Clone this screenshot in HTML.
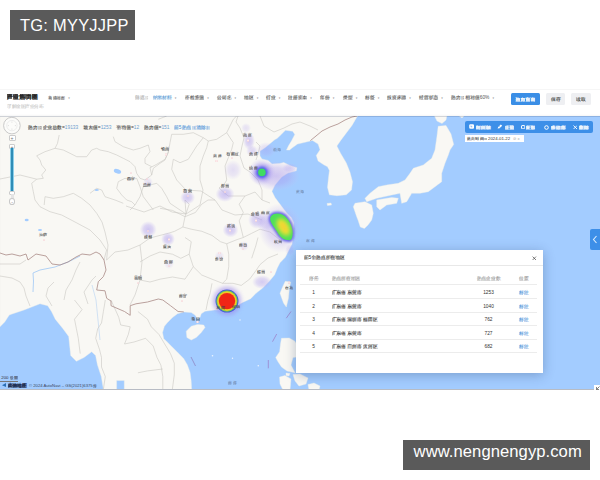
<!DOCTYPE html>
<html><head><meta charset="utf-8"><title>产业热力图</title>
<style>
*{margin:0;padding:0;box-sizing:border-box}
html,body{width:600px;height:480px;background:#fff;overflow:hidden}
body{position:relative;font-family:"Liberation Sans",sans-serif;color:#333}
.a{position:absolute;white-space:nowrap}
.logo .z,.ttl .z,.tb .z{background:linear-gradient(color-mix(in srgb,currentColor 75%,transparent),color-mix(in srgb,currentColor 75%,transparent)) 50% 60%/90% 70% no-repeat}
.z{display:inline-block;width:1em;line-height:1.15em;text-align:center;background:linear-gradient(color-mix(in srgb,currentColor 28%,transparent),color-mix(in srgb,currentColor 28%,transparent)) 50% 60%/80% 62% no-repeat}
.wm{background:#5a5a5a;color:#fff}
#hdr{left:0;top:89px;width:600px;height:27px;background:#fff;border-top:1px solid #f6f6f6}
.f{font-size:4.8px;line-height:5px;top:95.2px;color:#555}
.f i{font-style:normal;font-size:2.6px;color:#888;margin-left:2.6px;vertical-align:.5px}
.btn{top:92.7px;height:12.2px;border-radius:1.5px;font-size:5px;line-height:12.2px;text-align:center}
#map{left:0;top:116px;width:600px;height:274px;overflow:hidden;background:#a3ccff;border-bottom:.8px solid #b8bcc4}
.lbl{font-size:4.3px;line-height:5px;color:#444}
.dot{width:2.4px;height:2.4px;border-radius:50%;background:#e27c86;border:.45px solid #fde8ea}
</style></head><body>

<div class="a wm" style="left:10px;top:10px;width:125px;height:30px;font-size:16.4px;letter-spacing:.28px;line-height:30px;padding-left:10px">TG: MYYJJPP</div>

<div id="hdr" class="a">
</div>
<div class="a ttl" style="left:6.5px;top:93px;font-size:6.3px;line-height:8px;font-weight:bold;color:#222"><span class="z">产</span><span class="z">业</span><span class="z">热</span><span class="z">力</span><span class="z">图</span></div>
<div class="a" style="left:7px;top:103.5px;font-size:4.5px;line-height:6px;color:#c8c8c8"><span class="z">了</span><span class="z">解</span><span class="z">全</span><span class="z">国</span><span class="z">产</span><span class="z">业</span><span class="z">分</span><span class="z">布</span></div>
<div class="a f" style="left:48.3px;font-size:4.2px"><span class="z">高</span><span class="z">德</span><span class="z">地</span><span class="z">图</span><i>▼</i></div>
<div class="a f" style="left:135px;color:#aaa"><span class="z">筛</span><span class="z">选</span><span class="z">：</span></div>
<div class="a f" style="left:152.5px;color:#5b9bd5"><span class="z">纳</span><span class="z">米</span><span class="z">材</span><span class="z">料</span><i>▼</i></div>
<div class="a f" style="left:185px"><span class="z">不</span><span class="z">检</span><span class="z">查</span><span class="z">值</span><i>▼</i></div>
<div class="a f" style="left:217px"><span class="z">公</span><span class="z">司</span><span class="z">名</span><i>▼</i></div>
<div class="a f" style="left:244px"><span class="z">地</span><span class="z">区</span><i>▼</i></div>
<div class="a f" style="left:266px"><span class="z">行</span><span class="z">业</span><i>▼</i></div>
<div class="a f" style="left:288px"><span class="z">注</span><span class="z">册</span><span class="z">资</span><span class="z">本</span><i>▼</i></div>
<div class="a f" style="left:320px"><span class="z">年</span><span class="z">份</span><i>▼</i></div>
<div class="a f" style="left:343px"><span class="z">类</span><span class="z">型</span><i>▼</i></div>
<div class="a f" style="left:365px"><span class="z">标</span><span class="z">签</span><i>▼</i></div>
<div class="a f" style="left:387px"><span class="z">投</span><span class="z">资</span><span class="z">来</span><span class="z">源</span><i>▼</i></div>
<div class="a f" style="left:419px"><span class="z">经</span><span class="z">营</span><span class="z">状</span><span class="z">态</span><i>▼</i></div>
<div class="a f" style="left:451px"><span class="z">热</span><span class="z">力</span><span class="z">：</span><span class="z">相</span><span class="z">对</span><span class="z">值</span>60%<i>▼</i></div>
<div class="a btn tb" style="left:510.5px;width:29.6px;background:#3a8ee6;color:#fff"><span class="z">热</span><span class="z">力</span><span class="z">查</span><span class="z">询</span></div>
<div class="a btn" style="left:546.2px;width:19.3px;background:#eeeff2;color:#444"><span class="z">保</span><span class="z">存</span></div>
<div class="a btn" style="left:570.7px;width:20.6px;background:#eeeff2;color:#444"><span class="z">读</span><span class="z">取</span></div>

<div id="map" class="a">
<svg width="600" height="275" viewBox="0 116 600 275" style="position:absolute;left:0;top:0">
<defs>
  <radialGradient id="lav"><stop offset="0" stop-color="#a896ee" stop-opacity=".62"/><stop offset=".55" stop-color="#b0a0f0" stop-opacity=".45"/><stop offset=".85" stop-color="#c0b4f2" stop-opacity=".18"/><stop offset="1" stop-color="#c8bef4" stop-opacity="0"/></radialGradient>
  <filter id="bl05" x="-50%" y="-50%" width="200%" height="200%"><feGaussianBlur stdDeviation=".6"/></filter>
  <filter id="bl1" x="-50%" y="-50%" width="200%" height="200%"><feGaussianBlur stdDeviation="1"/></filter>
  <filter id="bl2" x="-50%" y="-50%" width="200%" height="200%"><feGaussianBlur stdDeviation="2"/></filter>
  <filter id="bl3" x="-80%" y="-80%" width="260%" height="260%"><feGaussianBlur stdDeviation="3"/></filter>
</defs>
<g fill="#f9f8f4" stroke="#f0efe9" stroke-width=".4"><path d="M0,116 L357.5,116 L352,125.4 L346.3,132.9 L340.7,140.4 L336.9,146 L340.7,153.5 L346.3,162.9 L350,172.3 L352.5,181.7 L351.5,190 L346.3,194.8 L336.9,195.7 L329.4,194.8 L327.5,187.3 L328.5,177.9 L329.4,170.4 L327.5,166.7 L323.8,164.8 L318.1,161 L316.3,155.4 L320,149.8 L318.1,144.1 L312.5,140.4 L305,142.3 L297.5,144.1 L292,148 L289.6,150 L286.5,150 L288.5,145.8 L291.7,140.6 L294.8,134.4 L292.7,131.3 L285.4,130.2 L281.25,134.4 L277,138.5 L275,139.5 L265,147.7 L260,151 L260,156 L262,159 L268,160.4 L272,164 L279.6,163.5 L283.75,162.5 L290,165.6 L296.8,167.7 L296.25,170.8 L288,173 L281.7,177 L275,185 L271.9,191.25 L275,197.5 L278.75,202.5 L282.5,207.5 L286.25,212.5 L291.25,217.5 L293.75,222.5 L293.5,230 L293.3,235 L292,244 L289.3,249.3 L285.3,257.3 L280,262.7 L277.3,268 L274.7,274.7 L269.3,281.3 L262.7,288 L256,293.3 L250.7,298.7 L242.5,302.5 L233,308 L223.8,310 L214.4,310 L205,311.25 L201.25,313.75 L200,317.5 L197.5,318.75 L195,315 L191.25,312.5 L183.75,311.9 L177.5,313.75 L172.5,317.5 L167.5,322.5 L164.4,326.25 L162.5,332.5 L163.75,338.75 L166.25,341 L171.7,346.5 L178.2,353 L183.6,358.4 L187.4,364.9 L190.1,372.5 L191.2,381.2 L191.7,391 L124.3,391 L124.3,380.5 L116.6,380.5 L116.6,391 L103.2,391 L103.2,388 L101.3,376.6 L97.5,365.1 L95.6,355.6 L91.7,351.7 L84,357.5 L76.4,361.3 L70.7,355.6 L69.7,346 L68.7,336.4 L63,328.7 L55.3,319.2 L51.5,311.5 L47.7,305.7 L40,303.8 L24,310 L12,314 L9.3,315 L4.7,322 L0,326.7 Z"/><path d="M438.2,126.3 L446,125.5 L451,134 L453.7,144.4 L450,150 L448.3,155 L445,163.3 L441.7,173.3 L441.7,181.7 L435,186.7 L428.3,191.7 L420,193.3 L411.7,193.3 L406.7,201.7 L401.7,203.3 L400,193.3 L391.7,195 L376.7,198.3 L366.7,201.7 L365,198.3 L370,193.3 L378.3,186.7 L386.7,185 L398.3,183.3 L405,180 L410,173.3 L413.3,168.3 L423.3,165 L431.7,158.3 L435,150 L436.9,136.7 Z"/><path d="M434,115 L447,115 L446,120 L442,123.5 L437,121 Z"/><path d="M458,115 L465,115 L462,118 Z"/><path d="M376.7,200 L391.7,197.5 L398.3,198.3 L396.7,203.3 L386.7,205 L380,210 L376.7,206.7 Z"/><path d="M355,203.3 L365,201.7 L371.7,205 L373.3,213.3 L371.7,220 L368,225 L364.4,228.5 L360.3,227 L358,220 L356.7,216.7 L353.3,206.7 Z"/><path d="M285.3,281.3 L290.7,282 L289.3,289.3 L288.5,298 L286.3,307 L283.5,303 L280,293.3 L282.7,286.7 Z"/><path d="M186.25,331.25 L191.25,326.25 L197.5,324.4 L203.75,325 L205,327.5 L201.25,332.5 L196.25,337.5 L191.25,340 L186.9,337.5 Z"/><path d="M281.5,338.3 L289.2,338 L294.9,341.2 L297,345 L297,357 L293,357.5 L291,365.1 L295,372.8 L287,371 L281.5,367 L277.7,361.3 L275.7,357.5 L279.6,351.7 L280.5,344 Z"/><path d="M327,203.5 L331,203 L331.5,205 L327.5,205.5 Z"/><path d="M279.6,377 L285,375.5 L291,379 L290,390 L283,390 L280,384 Z"/><path d="M293,374.5 L300,374 L308,378 L306,384 L299,386 L295,381 Z"/><path d="M308,384.5 L314,383 L320,386 L319,390 L309,390 Z"/><path d="M286,373 L290,373.5 L289,376 L286,375.5 Z"/></g>
<ellipse cx="117.5" cy="171.2" rx="3.8" ry="2.2" transform="rotate(20 117.5 171.2)" fill="#a3ccff"/><ellipse cx="26.7" cy="220" rx="2" ry="1.2" fill="#a3ccff"/><ellipse cx="40" cy="230" rx="2" ry="1" fill="#a3ccff"/><ellipse cx="96.7" cy="190" rx="2.2" ry="1" fill="#a3ccff"/><path d="M33,292 L33.5,281 L33,273 L40,270 L55,267 L68,262 L80,256" stroke="#a9cdf5" stroke-width=".9" fill="none"/><path d="M100,340 L98,320 L96,300 L92,285" stroke="#b5d2f2" stroke-width=".6" fill="none"/>
<path d="M160,208.3 L172.5,210.4 L185,216.7 L195.4,212.5 L201.7,204.2 L208,200 L215,200" fill="none" stroke="#cac8c3" stroke-width="0.6" stroke-linejoin="round" opacity="1"/><path d="M185,216.7 L182.9,227 L174.6,231.3 L168.3,233.3 L160,235.4 L150,238 L140,245 L128,250 L115,252 L106.6,260" fill="none" stroke="#cac8c3" stroke-width="0.6" stroke-linejoin="round" opacity="1"/><path d="M182.9,227 L191.25,229.2 L201.7,231.25 L212,235.4 L220.4,241.7 L226.7,243.75 L237,239.6 L243.3,237.5 L251.7,233.3 L260,229.2 L270,232 L280,240" fill="none" stroke="#cac8c3" stroke-width="0.6" stroke-linejoin="round" opacity="1"/><path d="M185,237.5 L191.25,241.7 L189.2,254.2 L193.3,266.7 L201.7,275 L212,279.2 L222.5,283.3 L233,283.3 L241.25,285.4 L249.6,279.2 L255.8,270.8 L260,264.6 L268,258 L278,254" fill="none" stroke="#cac8c3" stroke-width="0.6" stroke-linejoin="round" opacity="1"/><path d="M140,262 L150,256 L160,252 L172.5,254.2 L180.8,258.3 L189.2,254.2" fill="none" stroke="#cac8c3" stroke-width="0.6" stroke-linejoin="round" opacity="1"/><path d="M140,280 L150,282 L160,279.2 L172.5,277 L185,279.2 L193.3,266.7" fill="none" stroke="#cac8c3" stroke-width="0.6" stroke-linejoin="round" opacity="1"/><path d="M226.7,243.75 L228.75,254.2 L228.75,266.7 L226.7,279.2 L222.5,283.3" fill="none" stroke="#cac8c3" stroke-width="0.6" stroke-linejoin="round" opacity="1"/><path d="M243.3,237.5 L239.2,220.8 L243.3,212.5 L239.2,204.2 L245,196" fill="none" stroke="#cac8c3" stroke-width="0.6" stroke-linejoin="round" opacity="1"/><path d="M212,283.3 L210,293.75 L208,300 L206,310" fill="none" stroke="#cac8c3" stroke-width="0.6" stroke-linejoin="round" opacity="1"/><path d="M251.7,258.3 L255.8,245.8 L258,237.5" fill="none" stroke="#cac8c3" stroke-width="0.6" stroke-linejoin="round" opacity="1"/><path d="M185,216.7 L189.2,204.2 L185,200 L186,214" fill="none" stroke="#cac8c3" stroke-width="0.6" stroke-linejoin="round" opacity="1"/><path d="M140,245 L142,262 L140,280 L135,295 L130,305" fill="none" stroke="#cac8c3" stroke-width="0.6" stroke-linejoin="round" opacity="1"/><path d="M59.2,135 L57.5,143.3 L55,148.3 L45,151.7 L36.7,155.8 L40,160 L41.7,165 L45.8,170 L41.7,175 L43.3,178.3 L36.7,179.2 L30,177.5 L20,175 L0,179" fill="none" stroke="#cac8c3" stroke-width="0.6" stroke-linejoin="round" opacity="1"/><path d="M55,148.3 L63.3,150 L70,153.3 L76.7,156.7 L86.7,156.7 L91.7,150 L96.7,148.3 L100,150 L108.3,151.7 L116.7,155 L123.3,158.3 L130,161.7 L135,166.7 L136.7,173.3 L140,178.3 L145,180 L151.7,175 L153.3,168.3 L160,163.3 L165,160 L168.3,151.7 L166.7,146.7" fill="none" stroke="#cac8c3" stroke-width="0.6" stroke-linejoin="round" opacity="1"/><path d="M36.7,179.2 L31.7,183.3 L33.3,191.7 L35,200 L40,206.7 L50,211.7 L61.7,215 L75,222 L90,230 L100,240 L106.6,250 L104,260" fill="none" stroke="#cac8c3" stroke-width="0.6" stroke-linejoin="round" opacity="1"/><path d="M45,196.7 L44.2,205" fill="none" stroke="#cac8c3" stroke-width="0.6" stroke-linejoin="round" opacity="1"/><path d="M45,196.7 L53.3,198.3 L63.3,196.7 L73.3,193.3 L81.7,198.3 L90,205 L96.7,213.3 L102,222 L105,232 L108,245 L106.6,260" fill="none" stroke="#cac8c3" stroke-width="0.6" stroke-linejoin="round" opacity="1"/><path d="M113.3,136.7 L115,141.7 L123.3,146.7 L133.3,150 L140,148.3 L148.3,145 L150,151.7 L145,158.3 L145,163.3 L151.7,166.7" fill="none" stroke="#cac8c3" stroke-width="0.6" stroke-linejoin="round" opacity="1"/><path d="M118.3,181.7 L125,178.3 L131.7,180 L136.7,178.3" fill="none" stroke="#cac8c3" stroke-width="0.6" stroke-linejoin="round" opacity="1"/><path d="M118.3,181.7 L116.7,188.3 L121.7,195 L126.7,200 L131.7,201.7 L135,205 L130,210" fill="none" stroke="#cac8c3" stroke-width="0.6" stroke-linejoin="round" opacity="1"/><path d="M90,193.3 L96.7,188.3 L101.7,190 L105,196.7 L115,200 L123.3,203.3" fill="none" stroke="#cac8c3" stroke-width="0.6" stroke-linejoin="round" opacity="1"/><path d="M135,205 L140,196.7 L143.3,186.7 L150,185 L156.7,183.3 L161.7,188.3 L166.7,196.7 L170,203.3 L186,214" fill="none" stroke="#cac8c3" stroke-width="0.6" stroke-linejoin="round" opacity="1"/><path d="M171.7,134.3 L170,142.7 L168.3,152.7 L165,159.3 L156.7,164.3 L150,167.7 L151.7,175" fill="none" stroke="#cac8c3" stroke-width="0.6" stroke-linejoin="round" opacity="1"/><path d="M136.7,178.3 L140,186.7 L143.3,196.7 L148.3,203.3 L153.3,210" fill="none" stroke="#cac8c3" stroke-width="0.6" stroke-linejoin="round" opacity="1"/><path d="M173.3,159.3 L180,162.7 L188.3,159.3 L196.7,146 L203.3,137.7" fill="none" stroke="#cac8c3" stroke-width="0.6" stroke-linejoin="round" opacity="1"/><path d="M173.3,159.3 L171.7,169.3 L176.7,180 L186,190 L201,191" fill="none" stroke="#cac8c3" stroke-width="0.6" stroke-linejoin="round" opacity="1"/><path d="M158.3,119.3 L166.7,116" fill="none" stroke="#cac8c3" stroke-width="0.6" stroke-linejoin="round" opacity="1"/><path d="M126,206 L144,212 L160,206 L172,212 L186,214 L200,205 L203,190" fill="none" stroke="#cac8c3" stroke-width="0.6" stroke-linejoin="round" opacity="1"/><path d="M225,183 L219,188 L228,196 L245,196 L255,192 L262,200 L270,203" fill="none" stroke="#cac8c3" stroke-width="0.6" stroke-linejoin="round" opacity="1"/><path d="M201,191 L215,200 L222,210 L235,215 L248,214 L262,220" fill="none" stroke="#cac8c3" stroke-width="0.6" stroke-linejoin="round" opacity="1"/><path d="M226.7,132.7 L233.3,142.7 L231.7,149.3 L228.3,157.7 L225,166 L226.7,180 L225,183" fill="none" stroke="#cac8c3" stroke-width="0.6" stroke-linejoin="round" opacity="1"/><path d="M171.7,134.3 L183.3,134.3 L193.3,132.7 L203.3,137.7 L208.3,141 L206.7,147.7 L203.3,156 L200,166 L200,180 L203,190" fill="none" stroke="#cac8c3" stroke-width="0.6" stroke-linejoin="round" opacity="1"/><path d="M208.3,141 L216.7,139.3 L226.7,132.7 L230,126 L233.3,119.3 L236.7,116" fill="none" stroke="#cac8c3" stroke-width="0.6" stroke-linejoin="round" opacity="1"/><path d="M240,128 L244,138 L242,146 L240,156 L244,168 L250,172" fill="none" stroke="#cac8c3" stroke-width="0.6" stroke-linejoin="round" opacity="1"/><path d="M260,116 L264,126 L274,132 L284,128 L292,124 L300,122 L310,126 L318,130" fill="none" stroke="#cac8c3" stroke-width="0.6" stroke-linejoin="round" opacity="1"/><path d="M256,142 L260,146 L258,154 L256,160" fill="none" stroke="#cac8c3" stroke-width="0.6" stroke-linejoin="round" opacity="1"/><path d="M240,128 L236,122 L238,116" fill="none" stroke="#cac8c3" stroke-width="0.6" stroke-linejoin="round" opacity="1"/><path d="M250,172 L258,180 L262,190 L262,200" fill="none" stroke="#cac8c3" stroke-width="0.6" stroke-linejoin="round" opacity="1"/><path d="M105.3,300 L103.4,311.5 L101.5,323 L97.7,328.7 L95.7,338.3 L99.6,349.8 L101.5,357.5 L101.5,367 L105.3,376.6 L103.4,389" fill="none" stroke="#cac8c3" stroke-width="0.6" stroke-linejoin="round" opacity="1"/><path d="M118.7,317.2 L120.7,325 L130.2,326.8 L128.3,334.5 L124.5,344 L134,342 L145.6,338.3 L153.2,346 L157,357.5 L160.9,365.1 L162.8,376.6 L162.8,389" fill="none" stroke="#cac8c3" stroke-width="0.6" stroke-linejoin="round" opacity="1"/><path d="M137.9,311.5 L147.5,319.2 L151.3,326.8 L159,334.5 L164.7,344 L170.5,353.6 L174.3,363.2 L174.3,374.7 L172.4,389" fill="none" stroke="#cac8c3" stroke-width="0.6" stroke-linejoin="round" opacity="1"/><path d="M137.9,372.8 L147.5,370.9 L162.8,369" fill="none" stroke="#cac8c3" stroke-width="0.6" stroke-linejoin="round" opacity="1"/><path d="M0,264 L12,264 L20,264 L26,260" fill="none" stroke="#cac8c3" stroke-width="0.6" stroke-linejoin="round" opacity="1"/><path d="M0,276 L12,278 L20,282 L24,288 L26,296 L30,306" fill="none" stroke="#cac8c3" stroke-width="0.6" stroke-linejoin="round" opacity="1"/><path d="M54,282 L48,288 L46,296 L52,306" fill="none" stroke="#cac8c3" stroke-width="0.6" stroke-linejoin="round" opacity="1"/><path d="M64,300 L66,290 L72,280 L76,270 L80,262" fill="none" stroke="#cac8c3" stroke-width="0.6" stroke-linejoin="round" opacity="1"/><path d="M88,304 L84,292 L92,280 L96,276" fill="none" stroke="#cac8c3" stroke-width="0.6" stroke-linejoin="round" opacity="1"/><path d="M74.5,300 L82.1,309.6 L74.5,319.2 L76.4,328.7 L78.3,338.3 L80.2,353.6" fill="none" stroke="#cac8c3" stroke-width="0.6" stroke-linejoin="round" opacity="1"/><path d="M111,300 L118.7,317.2" fill="none" stroke="#cac8c3" stroke-width="0.6" stroke-linejoin="round" opacity="1"/>
<path d="M0,253 L6,255 L12,254 L20,256 L26,254 L28,260 L36,254 L46,256 L52,264 L60,265 L68,262 L76,257 L82,254 L90,255 L96,252 L100,254 L104,260 L106,270 L103.3,276.7 L98.3,281.7 L96.7,290 L105,290.8 L106.7,298.3 L111,301 L111,305.7 L124.5,311.5 L130.2,315.3 L130.2,305.7 L136,303.8 L147.5,302 L158.3,299 L162.8,300 L170.5,305.7 L178.1,311.5 L183.75,311.9" fill="none" stroke="#a98a86" stroke-width="0.8" stroke-linejoin="round" opacity="1"/><path d="M310.4,140.6 L316,136 L322,131 L330,127 L338,124 L345,120 L352,117 L357,116" fill="none" stroke="#a98a86" stroke-width="0.8" stroke-linejoin="round" opacity="1"/>
<path d="M286.3,318.2 L291,311.5 M272.5,341.7 L276.7,334 M268.3,360 L268.3,368.3" stroke="#9a6ab8" stroke-width=".6"/><circle cx="212.5" cy="355.8" r=".8" fill="#eef5ff"/><circle cx="232.5" cy="358.3" r=".7" fill="#eef5ff"/><circle cx="258.3" cy="365.8" r=".8" fill="#eef5ff"/><circle cx="240" cy="320" r=".7" fill="#eef5ff"/><path d="M191,357 L195.5,366" stroke="#8a70b0" stroke-width=".6"/>
<ellipse cx="249" cy="141" rx="6" ry="9" fill="url(#lav)" opacity="0.8"/><ellipse cx="252" cy="151" rx="6" ry="6" fill="url(#lav)" opacity="0.6"/><ellipse cx="266" cy="150" rx="10" ry="8" fill="url(#lav)" opacity="0.5"/><ellipse cx="246" cy="128" rx="5" ry="5" fill="url(#lav)" opacity="0.4"/><ellipse cx="233" cy="170" rx="9" ry="10" fill="url(#lav)" opacity="0.45"/><ellipse cx="225" cy="194" rx="9.5" ry="8" fill="url(#lav)" opacity="0.9"/><ellipse cx="187.6" cy="197.5" rx="7.5" ry="7" fill="url(#lav)" opacity="0.8"/><ellipse cx="148.2" cy="229.5" rx="8.5" ry="8.5" fill="url(#lav)" opacity="0.85"/><ellipse cx="168" cy="239" rx="7" ry="7" fill="url(#lav)" opacity="0.85"/><ellipse cx="230.5" cy="230" rx="8" ry="7.5" fill="url(#lav)" opacity="0.85"/><ellipse cx="257" cy="220" rx="9" ry="9" fill="url(#lav)" opacity="0.8"/><ellipse cx="262" cy="282" rx="10" ry="7" fill="url(#lav)" opacity="0.75"/><ellipse cx="148" cy="182" rx="5" ry="5" fill="url(#lav)" opacity="0.4"/><ellipse cx="219.5" cy="256" rx="5" ry="5" fill="url(#lav)" opacity="0.35"/><ellipse cx="244" cy="246" rx="5" ry="5" fill="url(#lav)" opacity="0.4"/><ellipse cx="169" cy="264" rx="5" ry="5" fill="url(#lav)" opacity="0.35"/><ellipse cx="276" cy="176" rx="24" ry="15" fill="url(#lav)" opacity="0.85"/><ellipse cx="262" cy="172" rx="14" ry="14" fill="url(#lav)" opacity="0.75"/><ellipse cx="290" cy="168" rx="8" ry="5" fill="url(#lav)" opacity="0.6"/><ellipse cx="280" cy="228" rx="22" ry="25" fill="url(#lav)" opacity="0.75"/><ellipse cx="266" cy="222" rx="10" ry="10" fill="url(#lav)" opacity="0.6"/><ellipse cx="290" cy="250" rx="5" ry="6" fill="url(#lav)" opacity="0.4"/>

  <circle cx="261.9" cy="172.4" r="8" fill="#7a6ae8" opacity=".55" filter="url(#bl2)"/>
  <circle cx="261.9" cy="172.4" r="5.6" fill="#4658ee" opacity=".9" filter="url(#bl1)"/>
  <circle cx="261.9" cy="172.4" r="3.8" fill="#3fdc62" filter="url(#bl05)"/>
  <path d="M270.6,216.7 C273,212 283,212 287.3,218.75 C291,223 293.5,230 292.5,235.4 C292,239.5 290,241 288.3,240 C285,240.5 280,238 276.9,231.25 C274,227 268.5,221 270.6,216.7 Z" fill="#5a5ae8" stroke="#5a5ae8" stroke-width="3.2" opacity=".9" filter="url(#bl1)"/>
  <path d="M270.6,216.7 C273,212 283,212 287.3,218.75 C291,223 293.5,230 292.5,235.4 C292,239.5 290,241 288.3,240 C285,240.5 280,238 276.9,231.25 C274,227 268.5,221 270.6,216.7 Z" fill="#4ee05a" filter="url(#bl05)"/>
  <ellipse cx="283.5" cy="227" rx="5.5" ry="9.5" transform="rotate(-32 283.5 227)" fill="#f0e030" filter="url(#bl2)"/>
  <ellipse cx="284" cy="227" rx="2.5" ry="5" transform="rotate(-32 284 227)" fill="#f2c838" opacity=".45" filter="url(#bl1)"/>
  <circle cx="227" cy="301.1" r="14" fill="#9a86ec" opacity=".6" filter="url(#bl2)"/>
  <circle cx="227" cy="301.1" r="11.5" fill="#4a5ad8" filter="url(#bl05)"/>
  <circle cx="227" cy="301.1" r="10.6" fill="#62d05a"/>
  <circle cx="227" cy="301.1" r="9.8" fill="#f0c828" filter="url(#bl05)"/>
  <circle cx="227" cy="301.1" r="8.2" fill="#f02818" filter="url(#bl05)"/>

</svg>
<div class="a lbl" style="left:243.3px;top:16.1px"><span class="z">北</span><span class="z">京</span></div><div class="a dot" style="left:246.8px;top:23.3px"></div><div class="a lbl" style="left:249.3px;top:35.0px"><span class="z">天</span><span class="z">津</span></div><div class="a lbl" style="left:226.2px;top:35.0px"><span class="z">石</span><span class="z">家</span><span class="z">庄</span></div><div class="a dot" style="left:230.8px;top:40.8px"></div><div class="a lbl" style="left:213.3px;top:36.5px"><span class="z">太</span><span class="z">原</span></div><div class="a dot" style="left:215.3px;top:43.5px"></div><div class="a lbl" style="left:161.0px;top:30.0px"><span class="z">银</span><span class="z">川</span></div><div class="a dot" style="left:164.7px;top:37.3px"></div><div class="a lbl" style="left:126.4px;top:59.5px"><span class="z">西</span><span class="z">宁</span></div><div class="a dot" style="left:129.5px;top:55.5px"></div><div class="a lbl" style="left:142.4px;top:66.2px"><span class="z">兰</span><span class="z">州</span></div><div class="a dot" style="left:145.5px;top:61.6px"></div><div class="a lbl" style="left:249.3px;top:49.1px"><span class="z">济</span><span class="z">南</span></div><div class="a lbl" style="left:220.7px;top:67.2px"><span class="z">郑</span><span class="z">州</span></div><div class="a dot" style="left:224.1px;top:74.7px"></div><div class="a lbl" style="left:183.2px;top:72.0px"><span class="z">西</span><span class="z">安</span></div><div class="a dot" style="left:186.8px;top:78.8px"></div><div class="a lbl" style="left:250.7px;top:95.1px"><span class="z">合</span><span class="z">肥</span></div><div class="a dot" style="left:254.8px;top:103.3px"></div><div class="a lbl" style="left:261.3px;top:93.5px"><span class="z">南</span><span class="z">京</span></div><div class="a lbl" style="left:226.7px;top:107.1px"><span class="z">武</span><span class="z">汉</span></div><div class="a dot" style="left:228.8px;top:113.3px"></div><div class="a lbl" style="left:238.7px;top:125.7px"><span class="z">南</span><span class="z">昌</span></div><div class="a dot" style="left:241.8px;top:131.8px"></div><div class="a lbl" style="left:273.7px;top:122.5px"><span class="z">杭</span><span class="z">州</span></div><div class="a lbl" style="left:143.7px;top:118.0px"><span class="z">成</span><span class="z">都</span></div><div class="a dot" style="left:146.8px;top:114.1px"></div><div class="a lbl" style="left:162.7px;top:127.5px"><span class="z">重</span><span class="z">庆</span></div><div class="a dot" style="left:168.1px;top:122.3px"></div><div class="a lbl" style="left:214.7px;top:140.0px"><span class="z">长</span><span class="z">沙</span></div><div class="a dot" style="left:218.3px;top:135.8px"></div><div class="a lbl" style="left:164.3px;top:143.2px"><span class="z">贵</span><span class="z">阳</span></div><div class="a dot" style="left:167.8px;top:148.8px"></div><div class="a lbl" style="left:134.0px;top:159.0px"><span class="z">昆</span><span class="z">明</span></div><div class="a dot" style="left:137.1px;top:166.1px"></div><div class="a lbl" style="left:256.7px;top:153.0px"><span class="z">福</span><span class="z">州</span></div><div class="a dot" style="left:269.5px;top:154.8px"></div><div class="a lbl" style="left:284.7px;top:168.5px"><span class="z">台</span><span class="z">北</span></div><div class="a dot" style="left:287.8px;top:165.3px"></div><div class="a lbl" style="left:178.5px;top:177.4px"><span class="z">南</span><span class="z">宁</span></div><div class="a dot" style="left:180.5px;top:183.6px"></div><div class="a lbl" style="left:191.2px;top:200.2px"><span class="z">海</span><span class="z">口</span></div><div class="a dot" style="left:196.3px;top:204.8px"></div><div class="a lbl" style="left:39.0px;top:115.5px"><span class="z">拉</span><span class="z">萨</span></div><div class="a dot" style="left:43.1px;top:122.8px"></div><div class="a lbl" style="left:216.2px;top:188.5px"><span class="z">东</span><span class="z">莞</span></div><div class="a lbl" style="left:231.7px;top:187.5px"><span class="z">深</span><span class="z">圳</span></div><div class="a lbl" style="left:272.5px;top:31.5px;color:#6d86ad;font-size:3.8px"><span class="z">渤</span> <span class="z">海</span></div><div class="a lbl" style="left:295.5px;top:74.0px;color:#6d86ad;font-size:3.8px"><span class="z">黄</span> <span class="z">海</span></div><div class="a lbl" style="left:306.0px;top:123.0px;color:#6d86ad;font-size:3.8px"><span class="z">东</span> <span class="z">海</span></div><div class="a lbl" style="left:228.0px;top:265.2px;color:#6d86ad;font-size:3.8px"><span class="z">南</span> <span class="z">海</span></div>
</div>


<!-- map overlays -->
<div class="a" style="left:0;top:113.5px;width:600px;height:2.5px;background:linear-gradient(rgba(0,0,0,0),rgba(0,0,0,.035))"></div>
<div class="a" style="left:0;top:115.8px;width:600px;height:.9px;background:rgba(50,70,110,.2)"></div>
<svg class="a" style="left:2px;top:116px" width="20" height="20" viewBox="0 0 20 20"><circle cx="9.9" cy="9.6" r="8.3" fill="rgba(255,255,255,.5)" stroke="#c4c4c4" stroke-width=".9"/><circle cx="9.9" cy="9.6" r="5.2" fill="none" stroke="#e2e2e2" stroke-width=".6"/><path d="M9.9,5.6 L9.9,6.6 M9.9,12.6 L9.9,13.6 M5.9,9.6 L6.9,9.6 M12.9,9.6 L13.9,9.6" stroke="#d0d0d0" stroke-width=".7"/></svg>
<div class="a" style="left:8.5px;top:134.5px;width:7px;height:6px;border:.6px solid #ccc;background:#fff;border-radius:1px;font-size:5px;line-height:5px;text-align:center;color:#777">+</div>
<div class="a" style="left:8.75px;top:144px;width:6.5px;height:5px;border:.6px solid #ccc;background:#fff;border-radius:1px;font-size:5px;line-height:4px;text-align:center;color:#777">+</div>
<div class="a" style="left:10.3px;top:147.5px;width:3.6px;height:43.5px;background:#2f8cb6;border-left:.6px solid #8dd0ea;border-right:.6px solid #8dd0ea"></div>
<div class="a" style="left:8.75px;top:190.5px;width:6.5px;height:4px;border:.6px solid #ccc;background:#fff;border-radius:1px"></div>
<div class="a" style="left:10.5px;top:194px;width:3px;height:5px;background:#e4e4e4"></div>
<div class="a" style="left:8.6px;top:198px;width:6.8px;height:7px;border:.6px solid #c8c8c8;background:#fff;border-radius:50%;font-size:5px;line-height:6px;text-align:center;color:#777">-</div>

<div class="a" style="left:28px;top:125px;font-size:4.85px;line-height:5px;color:#444"><span class="z">热</span><span class="z">力</span><span class="z">：</span><span class="z">企</span><span class="z">业</span><span class="z">总</span><span class="z">数</span>=<span style="color:#6fa0d0">19133</span></div>
<div class="a" style="left:83.3px;top:125px;font-size:4.85px;line-height:5px;color:#444"><span class="z">最</span><span class="z">大</span><span class="z">值</span>=<span style="color:#6fa0d0">1253</span></div>
<div class="a" style="left:116.4px;top:125px;font-size:4.85px;line-height:5px;color:#444"><span class="z">平</span><span class="z">均</span><span class="z">值</span>=<span style="color:#6fa0d0">12</span></div>
<div class="a" style="left:144px;top:125px;font-size:4.85px;line-height:5px;color:#444"><span class="z">热</span><span class="z">力</span><span class="z">值</span>=<span style="color:#6fa0d0">151</span></div>
<div class="a" style="left:174px;top:125px;font-size:4.85px;line-height:5px;color:#4a8fd8"><span class="z">前</span>5<span class="z">热</span><span class="z">点</span><span class="z">（</span><span class="z">清</span><span class="z">除</span><span class="z">）</span></div>

<div class="a tb" style="left:465px;top:121px;width:127.5px;height:12px;background:#3d8fe8;border-radius:2px;color:#fff;font-size:4.9px;line-height:5px">
 <svg class="a" style="left:3.8px;top:3.4px" width="5.4" height="5" viewBox="0 0 5.4 5"><rect x=".2" y=".2" width="5" height="4.6" rx="1.3" fill="#fff"/><path d="M2,1.6 L2,2.8 L3.3,2.8" stroke="#3d8fe8" stroke-width=".6" fill="none"/></svg>
 <span class="a" style="left:11px;top:3.5px"><span class="z">时</span><span class="z">间</span><span class="z">轴</span></span>
 <svg class="a" style="left:32.3px;top:3.3px" width="5.6" height="5" viewBox="0 0 5.6 5"><path d="M.6,4.6 L1.2,3 L3.8,.4 L5.2,1.7 L2.6,4.2 Z" fill="#fff"/><path d="M2.2,2.4 L3.3,3.4" stroke="#3d8fe8" stroke-width=".5"/></svg>
 <span class="a" style="left:39.5px;top:3.5px"><span class="z">卫</span><span class="z">星</span></span>
 <svg class="a" style="left:55.8px;top:3.6px" width="4.4" height="4.4" viewBox="0 0 4.4 4.4"><rect x=".55" y=".55" width="3.3" height="3.3" rx=".5" fill="none" stroke="#fff" stroke-width="1"/></svg>
 <span class="a" style="left:60.5px;top:3.5px"><span class="z">矩</span><span class="z">形</span></span>
 <svg class="a" style="left:79.3px;top:3.5px" width="5" height="5" viewBox="0 0 5 5"><circle cx="2.5" cy="2.5" r="1.8" fill="none" stroke="#fff" stroke-width="1"/></svg>
 <span class="a" style="left:86px;top:3.5px"><span class="z">多</span><span class="z">边</span><span class="z">形</span></span>
 <svg class="a" style="left:107.5px;top:3.7px" width="4.6" height="4.6" viewBox="0 0 4.6 4.6"><path d="M.5,.5 L4.1,4.1 M4.1,.5 L.5,4.1" stroke="#fff" stroke-width=".9"/></svg>
 <span class="a" style="left:114px;top:3.5px"><span class="z">删</span><span class="z">除</span></span>
</div>
<div class="a" style="left:464.8px;top:134.5px;width:59px;height:7.6px;background:#fff;font-size:4.3px;line-height:7.6px;color:#333;padding-left:1.8px"><span class="z">热</span><span class="z">力</span><span class="z">时</span><span class="z">间</span><span class="z">：</span>2024-01-22 <span style="color:#aaa;margin-left:2px">⊘ x</span></div>

<div class="a" style="left:589.7px;top:229px;width:11px;height:21px;background:#3d8fe8;border-radius:2px 0 0 2px"></div>
<svg class="a" style="left:592px;top:235px" width="6" height="9" viewBox="0 0 6 9"><path d="M4.5,1 L1.5,4.5 L4.5,8" fill="none" stroke="#d8ecff" stroke-width="1.1"/></svg>

<div class="a" style="left:1.2px;top:374.5px;font-size:4.4px;line-height:5px;color:#334">200 <span class="z">公</span><span class="z">里</span></div>
<div class="a" style="left:0;top:380.6px;width:17.5px;height:.7px;background:#777"></div>
<div class="a logo" style="left:1.5px;top:383px;font-size:4.6px;line-height:6px;color:#1e2d50;font-weight:bold"><svg width="4" height="4" viewBox="0 0 4 4" style="vertical-align:-0.3px"><path d="M4,0 L0,2.2 L4,4 Z" fill="#2a6fb5"/></svg><span style="margin-left:2.4px"><span class="z">高</span><span class="z">德</span><span class="z">地</span><span class="z">图</span></span></div>
<div class="a" style="left:29px;top:383px;font-size:4.2px;line-height:6px;color:#3a4660">© 2024 AutoNavi – GS(2021)6375<span class="z">号</span></div>
<div class="a" style="left:594px;top:384.6px;width:6px;height:5.4px;background:#fff"></div><svg class="a" style="left:595.5px;top:385.5px" width="4" height="4" viewBox="0 0 4 4"><path d="M3.5,.5 L.5,3.5 M.5,1 L.5,3.5 L3,3.5" stroke="#333" stroke-width=".6" fill="none"/></svg>

<!-- modal -->
<div class="a" style="left:295.5px;top:250px;width:247.5px;height:123px;background:#fff;box-shadow:0 2px 11px rgba(30,50,90,.3)">
 <div class="a" style="left:8.2px;top:5px;font-size:4.8px;line-height:5.6px;color:#333"><span class="z">前</span>5<span class="z">个</span><span class="z">热</span><span class="z">点</span><span class="z">所</span><span class="z">在</span><span class="z">地</span><span class="z">区</span></div>
 <svg class="a" style="left:236.8px;top:5.5px" width="4.6" height="4.6" viewBox="0 0 4.6 4.6"><path d="M.6,.6 L4,4 M4,.6 L.6,4" stroke="#444" stroke-width=".7"/></svg>
 <div class="a" style="left:0;top:15px;width:247.5px;height:.6px;background:#e8e8e8"></div>
 <div class="a" style="left:4.5px;top:34px;width:237px;height:.6px;background:#ececec"></div>
 <div class="a" style="left:4.5px;top:48px;width:237px;height:.6px;background:#ececec"></div>
 <div class="a" style="left:4.5px;top:61.5px;width:237px;height:.6px;background:#ececec"></div>
 <div class="a" style="left:4.5px;top:75px;width:237px;height:.6px;background:#ececec"></div>
 <div class="a" style="left:4.5px;top:88.5px;width:237px;height:.6px;background:#ececec"></div>
 <div class="a" style="left:4.5px;top:102px;width:237px;height:.6px;background:#ececec"></div>
 <div class="a" style="left:0;top:26.0px;width:36px;text-align:center;font-size:4.8px;line-height:5.6px;color:#999"><span class="z">序</span><span class="z">号</span></div><div class="a" style="left:36px;top:26.0px;font-size:4.8px;line-height:5.6px;color:#999"><span class="z">热</span><span class="z">点</span><span class="z">所</span><span class="z">在</span><span class="z">地</span><span class="z">区</span></div><div class="a" style="left:173px;top:26.0px;width:40px;text-align:center;font-size:4.8px;line-height:5.6px;color:#999"><span class="z">热</span><span class="z">点</span><span class="z">企</span><span class="z">业</span><span class="z">数</span></div><div class="a" style="left:213px;top:26.0px;width:30px;text-align:center;font-size:4.8px;line-height:5.6px;color:#999"><span class="z">位</span><span class="z">置</span></div>
<div class="a" style="left:0;top:40.3px;width:36px;text-align:center;font-size:4.8px;line-height:5.6px;color:#333">1</div><div class="a" style="left:36px;top:40.3px;font-size:4.8px;line-height:5.6px;color:#333"><span class="z">广</span><span class="z">东</span><span class="z">省</span> <span class="z">东</span><span class="z">莞</span><span class="z">市</span></div><div class="a" style="left:173px;top:40.3px;width:40px;text-align:center;font-size:4.8px;line-height:5.6px;color:#333">1253</div><div class="a" style="left:213px;top:40.3px;width:30px;text-align:center;font-size:4.8px;line-height:5.6px;color:#4a8fd8"><span class="z">标</span><span class="z">注</span></div>
<div class="a" style="left:0;top:54.2px;width:36px;text-align:center;font-size:4.8px;line-height:5.6px;color:#333">2</div><div class="a" style="left:36px;top:54.2px;font-size:4.8px;line-height:5.6px;color:#333"><span class="z">广</span><span class="z">东</span><span class="z">省</span> <span class="z">东</span><span class="z">莞</span><span class="z">市</span></div><div class="a" style="left:173px;top:54.2px;width:40px;text-align:center;font-size:4.8px;line-height:5.6px;color:#333">1040</div><div class="a" style="left:213px;top:54.2px;width:30px;text-align:center;font-size:4.8px;line-height:5.6px;color:#4a8fd8"><span class="z">标</span><span class="z">注</span></div>
<div class="a" style="left:0;top:67.3px;width:36px;text-align:center;font-size:4.8px;line-height:5.6px;color:#333">3</div><div class="a" style="left:36px;top:67.3px;font-size:4.8px;line-height:5.6px;color:#333"><span class="z">广</span><span class="z">东</span><span class="z">省</span> <span class="z">深</span><span class="z">圳</span><span class="z">市</span> <span class="z">福</span><span class="z">田</span><span class="z">区</span></div><div class="a" style="left:173px;top:67.3px;width:40px;text-align:center;font-size:4.8px;line-height:5.6px;color:#333">762</div><div class="a" style="left:213px;top:67.3px;width:30px;text-align:center;font-size:4.8px;line-height:5.6px;color:#4a8fd8"><span class="z">标</span><span class="z">注</span></div>
<div class="a" style="left:0;top:80.8px;width:36px;text-align:center;font-size:4.8px;line-height:5.6px;color:#333">4</div><div class="a" style="left:36px;top:80.8px;font-size:4.8px;line-height:5.6px;color:#333"><span class="z">广</span><span class="z">东</span><span class="z">省</span> <span class="z">东</span><span class="z">莞</span><span class="z">市</span></div><div class="a" style="left:173px;top:80.8px;width:40px;text-align:center;font-size:4.8px;line-height:5.6px;color:#333">727</div><div class="a" style="left:213px;top:80.8px;width:30px;text-align:center;font-size:4.8px;line-height:5.6px;color:#4a8fd8"><span class="z">标</span><span class="z">注</span></div>
<div class="a" style="left:0;top:94.0px;width:36px;text-align:center;font-size:4.8px;line-height:5.6px;color:#333">5</div><div class="a" style="left:36px;top:94.0px;font-size:4.8px;line-height:5.6px;color:#333"><span class="z">广</span><span class="z">东</span><span class="z">省</span> <span class="z">广</span><span class="z">州</span><span class="z">市</span> <span class="z">天</span><span class="z">河</span><span class="z">区</span></div><div class="a" style="left:173px;top:94.0px;width:40px;text-align:center;font-size:4.8px;line-height:5.6px;color:#333">682</div><div class="a" style="left:213px;top:94.0px;width:30px;text-align:center;font-size:4.8px;line-height:5.6px;color:#4a8fd8"><span class="z">标</span><span class="z">注</span></div>

</div>

<div class="a wm" style="left:403px;top:440px;width:187px;height:30px;font-size:16.6px;letter-spacing:.07px;line-height:24px;padding-left:10.6px">www.nengnengyp.com</div>
</body></html>
